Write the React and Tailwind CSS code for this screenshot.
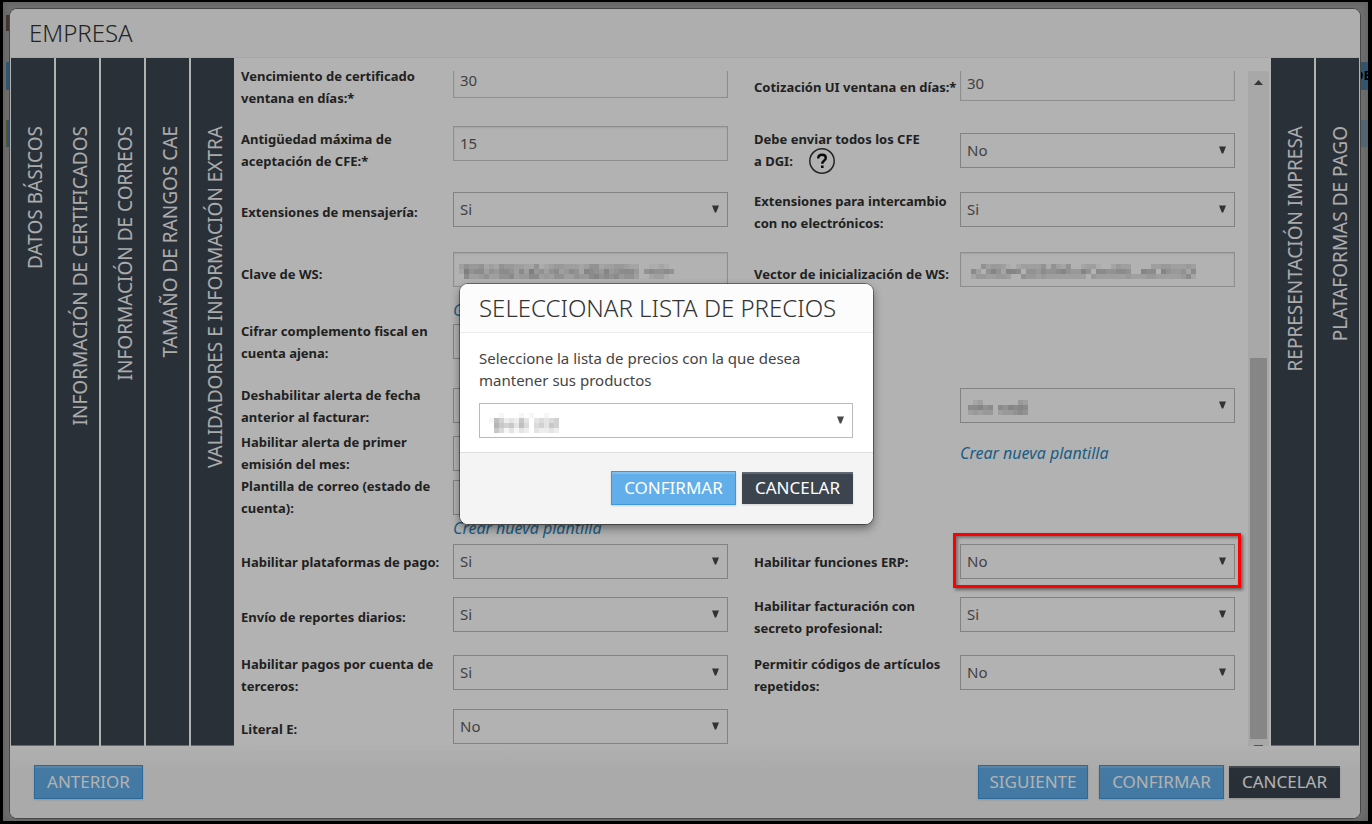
import { useId } from 'react';
import clsx from 'clsx';

const leftTabs = [
  'DATOS BÁSICOS',
  'INFORMACIÓN DE CERTIFICADOS',
  'INFORMACIÓN DE CORREOS',
  'TAMAÑO DE RANGOS CAE',
  'VALIDADORES E INFORMACIÓN EXTRA',
];

const rightTabs = ['REPRESENTACIÓN IMPRESA', 'PLATAFORMAS DE PAGO'];

// Masked values: one digit per cell, 0 = transparent, 9 = darkest
const masks = {
  clave: [
    '3544523254433225123443332355233443220011210',
    '2856635466536384535634652765474566640565565',
    '0633453355634466343553354467565645530023310',
  ],
  vector: [
    '00053443102333351532500233100243300003344333430',
    '06305752776055465567544750665566500766075445260',
    '02443344300544343333333304333333433344333334620',
  ],
  plantilla: ['023000000043', '667560657676', '343440344565'],
  lista: ['00100010100100', '17523263034345', '08656374045365', '06413132032232'],
};

function Mask({ name, className }) {
  const rows = masks[name];
  return (
    <svg
      className={clsx('pointer-events-none absolute', className)}
      width={rows[0].length * 5}
      height={rows.length * 5}
      shapeRendering="crispEdges"
      aria-hidden="true"
    >
      {rows.map((row, y) =>
        row
          .split('')
          .map((d, x) => <rect key={`${x}-${y}`} x={x * 5} y={y * 5} width="5" height="5" fillOpacity={Number(d) / 28} />)
      )}
    </svg>
  );
}

function Caret() {
  return (
    <svg className="pointer-events-none absolute top-[13px] right-[9px] text-[#4a4a4a]" width="7" height="8" viewBox="0 0 7 8" aria-hidden="true">
      <path d="M0 0.5H7L4.2 7.5H2.8Z" fill="currentColor" />
    </svg>
  );
}

function Select({ id, value, mask, label }) {
  return (
    <div className="relative">
      <select
        id={id}
        aria-label={label}
        defaultValue={value}
        className="block h-[35px] w-full appearance-none border border-[#bababa] bg-white pl-1.5 text-[15px] text-[#5e5e5e]"
      >
        {value ? (
          <>
            <option>Si</option>
            <option>No</option>
          </>
        ) : (
          <option value="" />
        )}
      </select>
      {mask && <Mask name={mask} className={mask === 'lista' ? 'top-2.5 left-2.5' : 'top-3 left-2'} />}
      <Caret />
    </div>
  );
}

function TextBox({ id, value = '', mask }) {
  return (
    <div className="relative">
      <input
        id={id}
        type="text"
        defaultValue={value}
        className="block h-[35px] w-full border border-[#ccc] bg-white pl-1.5 text-[15px] text-[#5e5e5e] shadow-[inset_0_1px_2px_rgba(0,0,0,0.1)]"
      />
      {mask && <Mask name={mask} className="top-3 left-1.5" />}
    </div>
  );
}

function HelpButton() {
  return (
    <button type="button" aria-label="Ayuda" className="ml-4 inline-flex h-[22px] items-center align-top">
      <svg width="26" height="26" viewBox="0 0 26 26" fill="none">
        <circle cx="13" cy="13" r="12.2" stroke="#333" strokeWidth="1.5" />
        <path d="M9.2 10.4C9.2 7.8 10.8 6.7 13 6.7C15.3 6.7 16.8 8 16.8 9.9C16.8 12.6 13.3 12.4 13.3 15.8" stroke="#111" strokeWidth="2.4" />
        <path d="M12 17.4H14.6V20H12Z" fill="#111" />
      </svg>
    </button>
  );
}

function Pair({ label, type, value, mask, help, side = 'left', labelClass, fieldClass, marked }) {
  const id = useId();
  return (
    <>
      <div
        className={clsx(
          'text-[13px] leading-[22px] font-bold text-[#303030]',
          side === 'right' ? 'pl-[26px]' : 'pr-3',
          labelClass
        )}
      >
        {label && <label htmlFor={id}>{label}</label>}
        {help && <HelpButton />}
      </div>
      <div className={clsx('relative', fieldClass)}>
        {type === 'select' && <Select id={id} value={value} mask={mask} label={label ? undefined : 'Plantilla de correo'} />}
        {type === 'text' && <TextBox id={id} value={value} mask={mask} />}
        {type === 'link' && (
          <a href="#plantilla" className="block text-[16px] leading-[18px] text-[#2a86be] italic">
            {value}
          </a>
        )}
        {marked && (
          <div className="pointer-events-none absolute -top-[11px] -right-1.5 -bottom-[9px] -left-[7px] z-20 border-3 border-[#f00] shadow-[2px_2px_3px_rgba(0,0,0,0.45),inset_2px_2px_3px_rgba(0,0,0,0.35)]" />
        )}
      </div>
    </>
  );
}

const rows = [
  {
    size: 'min-h-16',
    left: { label: 'Vencimiento de certificado ventana en días:*', type: 'text', value: '30', fieldClass: 'pb-3.5' },
    right: { label: 'Cotización UI ventana en días:*', type: 'text', value: '30', fieldClass: 'pb-2', labelClass: 'whitespace-nowrap' },
  },
  {
    size: 'min-h-[62px]',
    left: { label: 'Antigüedad máxima de aceptación de CFE:*', type: 'text', value: '15', fieldClass: 'pb-3.5' },
    right: { label: 'Debe enviar todos los CFE a DGI:', type: 'select', value: 'No', help: true, labelClass: 'pr-8' },
  },
  {
    size: 'min-h-[57px]',
    left: { label: 'Extensiones de mensajería:', type: 'select', value: 'Si', labelClass: 'pt-1' },
    right: { label: 'Extensiones para intercambio con no electrónicos:', type: 'select', value: 'Si', labelClass: 'pt-1' },
  },
  {
    size: 'min-h-[63px]',
    left: { label: 'Clave de WS:', type: 'text', mask: 'clave', labelClass: 'pt-2' },
    right: { label: 'Vector de inicialización de WS:', type: 'text', mask: 'vector', labelClass: 'pt-2 whitespace-nowrap' },
  },
  { size: 'min-h-[18px]', left: { type: 'link', value: 'Generar clave' } },
  { size: 'min-h-[45px]', left: { label: 'Cifrar complemento fiscal en cuenta ajena:', type: 'select', value: 'No' } },
  {
    size: 'mt-4 min-h-[51px]',
    left: { label: 'Deshabilitar alerta de fecha anterior al facturar:', type: 'select', value: 'No' },
    right: { type: 'select', mask: 'plantilla' },
  },
  {
    size: 'min-h-11',
    left: { label: 'Habilitar alerta de primer emisión del mes:', type: 'select', value: 'No' },
    right: { type: 'link', value: 'Crear nueva plantilla' },
  },
  { size: 'min-h-11', left: { label: 'Plantilla de correo (estado de cuenta):', type: 'select', value: 'No' } },
  { size: 'min-h-[18px]', left: { type: 'link', value: 'Crear nueva plantilla' } },
  {
    size: 'min-h-[49px]',
    left: { label: 'Habilitar plataformas de pago:', type: 'select', value: 'Si' },
    right: { label: 'Habilitar funciones ERP:', type: 'select', value: 'No', marked: true },
  },
  {
    size: 'min-h-[57px]',
    left: { label: 'Envío de reportes diarios:', type: 'select', value: 'Si', labelClass: 'pt-1' },
    right: { label: 'Habilitar facturación con secreto profesional:', type: 'select', value: 'Si', labelClass: 'pt-1' },
  },
  {
    size: 'min-h-[59px]',
    left: { label: 'Habilitar pagos por cuenta de terceros:', type: 'select', value: 'Si', labelClass: 'pt-1' },
    right: { label: 'Permitir códigos de artículos repetidos:', type: 'select', value: 'No', labelClass: 'pt-1' },
  },
  { size: 'min-h-[49px]', left: { label: 'Literal E:', type: 'select', value: 'No', labelClass: 'pt-1' } },
];

function Tabs({ items }) {
  return (
    <div className="flex shrink-0 gap-[2px]">
      {items.map((t) => (
        <button
          key={t}
          type="button"
          className="flex w-[43px] items-start justify-center border-b border-[#999] bg-[#3c4551] pt-[68px] pl-1 text-[19px] leading-6 text-[#f5f5f5]"
        >
          <span className="rotate-180 whitespace-nowrap [writing-mode:vertical-rl]">{t}</span>
        </button>
      ))}
    </div>
  );
}

function Button({ children, dark, className }) {
  return (
    <button
      type="button"
      className={clsx(
        'px-2.5 text-[17px] whitespace-nowrap text-white shadow-[inset_0_2px_1px_rgba(255,255,255,0.2),0_1px_2px_rgba(0,0,0,0.15)]',
        dark ? 'h-8 bg-[#3b444f]' : 'h-[34px] border border-[#3b97df] bg-[#61aeea]',
        className
      )}
    >
      {children}
    </button>
  );
}

function ScrollBar() {
  return (
    <div className="flex w-[21px] shrink-0 flex-col overflow-hidden bg-[#f1f1f1] pl-[2px]" aria-hidden="true">
      <svg width="17" height="17" viewBox="0 0 17 17" className="mt-[3px] shrink-0">
        <path d="M4 11L8.5 6L13 11Z" fill="#505050" />
      </svg>
      <div className="grow-[267]" />
      <div className="w-[17px] grow-[380] bg-[#c1c1c1]" />
      <div className="flex h-[7px] shrink-0 items-end pl-1">
        <div className="h-px w-[9px] bg-[#777]" />
      </div>
    </div>
  );
}

// What is left visible of the page below the dialogs
function PageBehind() {
  return (
    <div className="absolute inset-0 flex justify-between bg-[#9f9f9f] shadow-[inset_0_0_8px_rgba(0,0,0,0.15)]" aria-hidden="true">
      <div className="ml-[3px] w-4">
        <div className="mt-[13px] h-4 bg-[#5c4c44]" />
        <div className="mt-[31px] h-7 bg-[#48799c]" />
        <div className="mt-[30px] h-[27px] border-l border-[#7d7a4a] bg-[#48799c]" />
      </div>
      <div className="w-[18px] overflow-hidden">
        <div className="mt-[60px] flex h-7 items-center bg-[#48799c] pl-1 text-[13px] font-bold text-black">DE</div>
        <div className="mt-[30px] h-[27px] bg-[#7390a3]" />
      </div>
    </div>
  );
}

function CompanyDialog() {
  return (
    <section className="relative mt-1.5 mr-[7px] mb-[2px] ml-1.5 flex flex-1 flex-col overflow-hidden rounded-lg border border-[#666] bg-white">
      <header className="flex h-[49px] shrink-0 items-center border-b border-[#eee] bg-[#fafafa] pl-[19px]">
        <h1 className="text-[24px] font-light text-[#333]">EMPRESA</h1>
      </header>

      <div className="flex flex-1 px-px">
        <Tabs items={leftTabs} />
        <div className="flex min-w-0 flex-1 pt-[13px] pr-[2px]">
          <div className="min-w-0 flex-1 overflow-hidden pr-[13px] pl-[7px]">
            <div className="-mt-4 -mb-1.5">
              {rows.map((r, i) => (
                <div key={i} className={clsx('grid grid-cols-[212px_1fr_232px_1fr] items-center', r.size)}>
                  <Pair {...r.left} />
                  {r.right && <Pair {...r.right} side="right" />}
                </div>
              ))}
            </div>
          </div>
          <ScrollBar />
        </div>
        <Tabs items={rightTabs} />
      </div>

      <footer className="flex shrink-0 items-start bg-gradient-to-b from-[#fdfdfd] to-[#f4f4f4] to-35% px-5 py-[19px] pl-6">
        <Button className="min-w-[109px]">ANTERIOR</Button>
        <div className="ml-auto flex items-center">
          <Button className="min-w-[110px]">SIGUIENTE</Button>
          <Button className="ml-[11px] min-w-[125px]">CONFIRMAR</Button>
          <Button dark className="ml-[5px] min-w-[111px]">
            CANCELAR
          </Button>
        </div>
      </footer>
    </section>
  );
}

function PriceListDialog() {
  return (
    <div
      role="dialog"
      aria-labelledby="price-list-title"
      className="w-[413px] overflow-hidden rounded-lg bg-white shadow-[0_0_0_1px_rgba(0,0,0,0.4),0_4px_10px_rgba(0,0,0,0.45)]"
    >
      <header className="flex h-[49px] items-center border-b border-[#ebebeb] bg-[#fcfcfc] pl-[19px]">
        <h2 id="price-list-title" className="text-[24px] font-light text-[#333]">
          SELECCIONAR LISTA DE PRECIOS
        </h2>
      </header>
      <div className="py-3.5 pr-5 pl-[19px]">
        <p className="pb-3 text-[15px] leading-[22px] text-[#444]">
          Seleccione la lista de precios con la que desea mantener sus productos
        </p>
        <Select mask="lista" label="Lista de precios" />
      </div>
      <footer className="flex items-center justify-end gap-1.5 border-t border-[#ddd] bg-[#f4f4f4] px-5 pt-[18px] pb-[19px]">
        <Button className="min-w-[125px]">CONFIRMAR</Button>
        <Button dark className="min-w-[111px]">
          CANCELAR
        </Button>
      </footer>
    </div>
  );
}

export default function App() {
  return (
    <main className="flex min-h-screen border-t-2 border-r-4 border-b-3 border-l-3 border-black bg-[#9f9f9f] font-['Noto_Sans',sans-serif]">
      <div className="relative flex min-w-0 flex-1">
        <PageBehind />
        <CompanyDialog />
        <div className="absolute inset-0 z-10 flex items-center justify-center bg-black/30 pr-[38px] pb-[15px]">
          <PriceListDialog />
        </div>
      </div>
    </main>
  );
}
